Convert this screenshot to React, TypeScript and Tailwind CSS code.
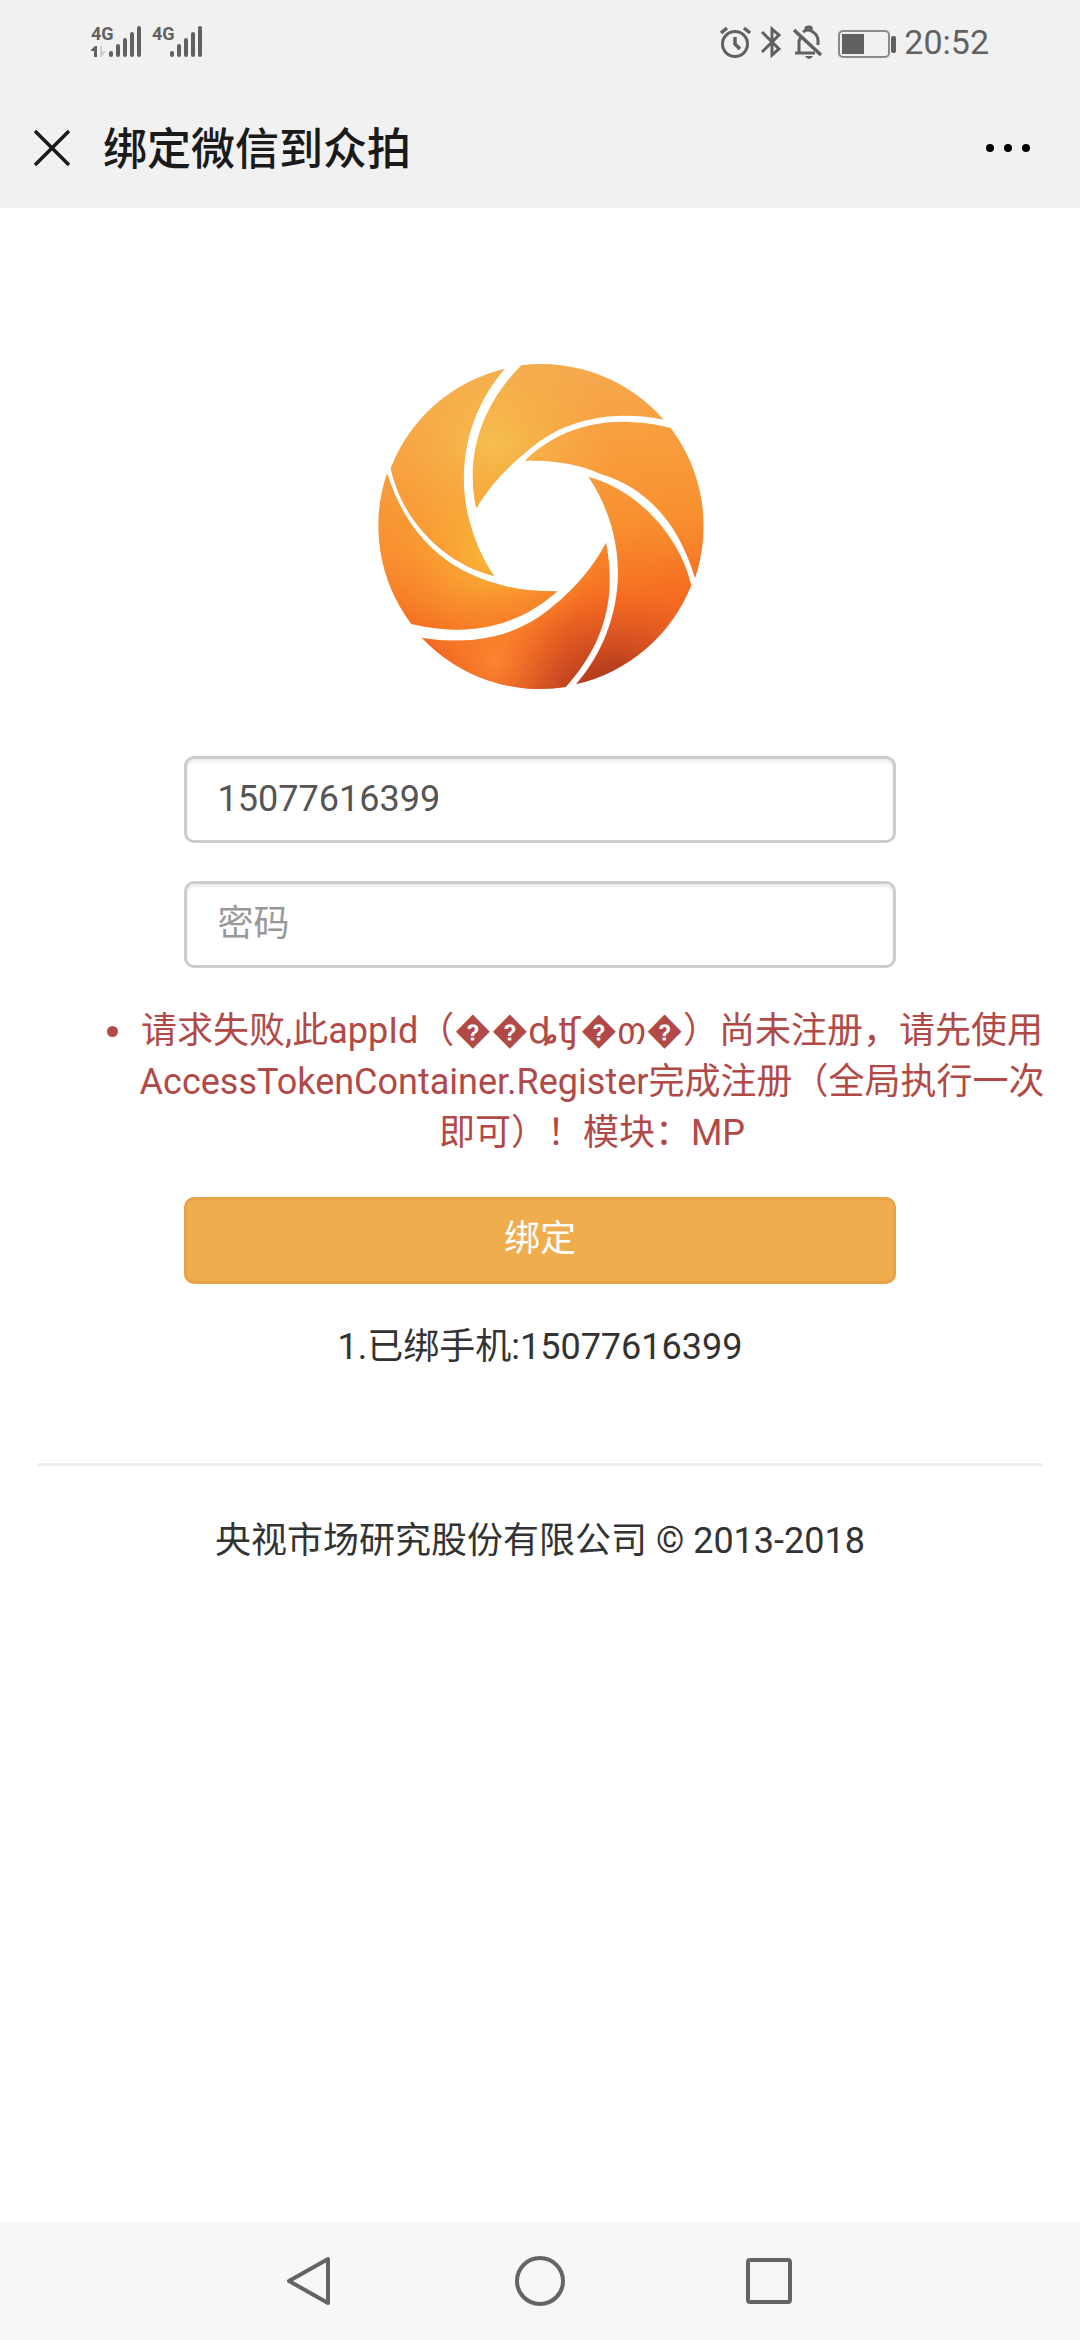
import { useState } from "react";

const ink = "#616161";

function Signal({ secondary = false }: { secondary?: boolean }) {
  return (
    <div className="relative h-8 w-[51px]">
      <span className="absolute left-0 top-0 text-[18px] font-bold leading-4 text-[#616161] font-['Liberation_Sans_Narrow','Roboto',sans-serif]">
        4G
      </span>
      <svg className="h-8 w-[51px]" viewBox="0 0 51 32" fill={ink}>
        {secondary && (
          <>
            <path d="M0 24L4 20H6V31H3V25H0Z" />
            <path d="M9 20H11V25H15L11 31H9Z" fill="#cfcfcf" />
          </>
        )}
        <rect x="18" y="25" width="4" height="6" rx="2" />
        <rect x="25" y="18" width="4" height="13" rx="2" />
        <rect x="32" y="12" width="4" height="19" rx="2" />
        <rect x="39" y="6" width="4" height="25" rx="2" />
        <rect x="46" y="0" width="4" height="31" rx="2" />
      </svg>
    </div>
  );
}

function StatusBar() {
  return (
    <div className="flex h-[84px] items-center justify-between px-[91px]">
      <div className="flex gap-[10px]">
        <Signal secondary />
        <Signal />
      </div>
      <div className="flex items-center">
        {/* alarm, bluetooth, muted bell, battery */}
        <svg
          className="h-9 w-[180px]"
          viewBox="0 0 180 36"
          fill="none"
          stroke={ink}
          strokeWidth="3"
        >
          <circle cx="15" cy="20" r="12.5" />
          <path d="M15 13V20L20 25" strokeWidth="3.5" />
          <path d="M1 9L7 4M30 9L24 4" strokeWidth="3.5" />
          <path d="M42 8L59 25L52 31V5L59 11L42 28" />
          <path d="M74 6L101 31" strokeWidth="3.5" />
          <path d="M75 29H95M79 29V17L81 13M83 8Q88 4 93 8Q98 11 98 17V21M86 6V4Q86 3 89 3T91 5V7" />
          <path d="M85 32H93Q91 35 89 35T85 32Z" fill={ink} stroke="none" />
          <rect x="119" y="7" width="50" height="26" rx="4" strokeWidth="2" stroke="#8a8a8a" />
          <rect x="122" y="10" width="22" height="20" fill={ink} stroke="none" />
          <rect x="171" y="12" width="5" height="17" rx="2" fill={ink} stroke="none" />
        </svg>
        <span className="ml-1 text-[34px] leading-9 text-[#616161]">20:52</span>
      </div>
    </div>
  );
}

function TitleBar() {
  return (
    <header className="flex h-[124px] items-center pl-[33px] pr-[50px] pt-1">
      <button type="button" aria-label="关闭">
        <svg className="h-[38px] w-[38px]" viewBox="0 0 38 38" stroke="#1a1a1a" strokeWidth="3.5">
          <path d="M2 2L36 36M36 2L2 36" />
        </svg>
      </button>
      <h1 className="ml-8 flex-1 pt-1 text-[44px] font-medium leading-[64px] text-[#1a1a1a]">
        绑定微信到众拍
      </h1>
      <button type="button" aria-label="更多" className="flex gap-[10px]">
        <span className="h-2 w-2 rounded-full bg-black" />
        <span className="h-2 w-2 rounded-full bg-black" />
        <span className="h-2 w-2 rounded-full bg-black" />
      </button>
    </header>
  );
}

function Logo() {
  return (
    <svg className="h-[360px] w-[360px]" viewBox="0 0 1080 1080" role="img" aria-label="众拍">
      <defs>
        <clipPath id="blades">
          <path d="M484 46A488 488 0 0 1 911 209C800 185 640 190 520 288C455 340 395 395 349 475C315 320 365 165 484 46Z" />
          <path d="M932 234A488 488 0 0 1 1005 685C955 515 855 410 720 371C650 340 570 330 495 332C605 222 765 190 932 234Z" />
          <path d="M994 706A488 488 0 0 1 649 1002C745 890 795 735 765 575C752 505 725 440 685 380C835 420 960 560 994 706Z" />
          <path d="M617 1011A488 488 0 0 1 185 863C320 885 460 870 575 772C650 710 700 650 738 578C770 740 735 880 617 1011Z" />
          <path d="M154 822A488 488 0 0 1 81 370C140 550 250 655 405 700C470 720 530 725 592 724C480 825 330 865 154 822Z" />
          <path d="M92 355A488 488 0 0 1 435 56C330 175 290 335 322 490C337 555 362 620 402 678C250 640 125 510 92 355Z" />
        </clipPath>
        <linearGradient id="base" gradientUnits="userSpaceOnUse" x1="480" y1="40" x2="600" y2="1020">
          <stop offset="0" stopColor="#f5ab50" />
          <stop offset="0.3" stopColor="#f89c3c" />
          <stop offset="0.52" stopColor="#f8902f" />
          <stop offset="0.76" stopColor="#f66c21" />
          <stop offset="1" stopColor="#e4562a" />
        </linearGradient>
        <radialGradient id="glowTop" gradientUnits="userSpaceOnUse" cx="400" cy="290" r="360">
          <stop offset="0" stopColor="#f6bf4e" />
          <stop offset="1" stopColor="#f6b04a" stopOpacity="0" />
        </radialGradient>
        <radialGradient id="glowMid" gradientUnits="userSpaceOnUse" cx="390" cy="610" r="330">
          <stop offset="0" stopColor="#f9b73a" />
          <stop offset="1" stopColor="#f9a032" stopOpacity="0" />
        </radialGradient>
        <radialGradient id="glowLow" gradientUnits="userSpaceOnUse" cx="410" cy="930" r="220">
          <stop offset="0" stopColor="#fa8630" />
          <stop offset="1" stopColor="#fa8025" stopOpacity="0" />
        </radialGradient>
        <radialGradient id="shade" gradientUnits="userSpaceOnUse" cx="760" cy="1080" r="380">
          <stop offset="0" stopColor="#8f281a" />
          <stop offset="0.4" stopColor="#b03a1c" stopOpacity="0.7" />
          <stop offset="1" stopColor="#e85a20" stopOpacity="0" />
        </radialGradient>
      </defs>
      <g clipPath="url(#blades)">
        <rect width="1080" height="1080" fill="url(#base)" />
        <rect width="1080" height="1080" fill="url(#glowTop)" />
        <rect width="1080" height="1080" fill="url(#glowMid)" />
        <rect width="1080" height="1080" fill="url(#glowLow)" />
        <rect width="1080" height="1080" fill="url(#shade)" />
      </g>
    </svg>
  );
}

const fieldClass =
  "h-[87px] w-[66%] rounded-[10px] border-[3px] border-[#ccc] bg-white px-[31px] pb-[2px] text-[#555] shadow-[inset_0_3px_3px_rgba(0,0,0,0.075)] outline-none placeholder:text-[#999]";

function BindForm() {
  const [phone, setPhone] = useState("15077616399");
  const [password, setPassword] = useState("");

  return (
    <form
      className="flex flex-col items-center"
      onSubmit={(e) => e.preventDefault()}
    >
      <input
        type="tel"
        name="phone"
        aria-label="手机号"
        value={phone}
        onChange={(e) => setPhone(e.target.value)}
        className={fieldClass}
      />
      <input
        type="password"
        name="password"
        aria-label="密码"
        placeholder="密码"
        value={password}
        onChange={(e) => setPassword(e.target.value)}
        className={`mt-[38px] ${fieldClass}`}
      />

      <ul className="mt-[38px] list-disc self-stretch pl-[136px] pr-8 text-center text-[#b14a47]">
        <li>
          请求失败,此appId（��ȡʧ�თ�）尚未注册，请先使用AccessTokenContainer.Register完成注册（全局执行一次即可）！模块：MP
        </li>
      </ul>

      <button
        type="submit"
        className="mt-[38px] h-[87px] w-[66%] rounded-[10px] border-[3px] border-[#e8a348] bg-[#f0ad4e] pb-[2px] text-white"
      >
        绑定
      </button>
    </form>
  );
}

function NavBar() {
  return (
    <nav className="flex h-[118px] items-center justify-center gap-[180px] bg-[#f7f7f7]">
      <button type="button" aria-label="返回">
        <svg className="h-[50px] w-[50px]" viewBox="0 0 50 50" fill="none" stroke="#646464" strokeWidth="4" strokeLinejoin="round">
          <path d="M4 25L43 3V47Z" />
        </svg>
      </button>
      <button type="button" aria-label="主页">
        <svg className="h-[50px] w-[50px]" viewBox="0 0 50 50" fill="none" stroke="#646464" strokeWidth="4">
          <circle cx="25" cy="25" r="23" />
        </svg>
      </button>
      <button type="button" aria-label="最近任务">
        <svg className="h-[50px] w-[50px]" viewBox="0 0 50 50" fill="none" stroke="#646464" strokeWidth="4">
          <rect x="3" y="4" width="42" height="42" rx="2" />
        </svg>
      </button>
    </nav>
  );
}

export default function App() {
  return (
    <div className="flex min-h-screen flex-col bg-white text-[36px] leading-[51px] text-[#333] font-['Roboto','Noto_Sans_CJK_SC','DejaVu_Sans',sans-serif]">
      <div className="bg-[#f1f1f1]">
        <StatusBar />
        <TitleBar />
      </div>
      <main className="flex-1">
        <div className="flex justify-center pb-[46px] pt-[142px]">
          <Logo />
        </div>
        <BindForm />
        <p className="mt-[38px] text-center">1.已绑手机:15077616399</p>
        <hr className="mx-[38px] mt-[90px] border-t-[3px] border-[#eee]" />
        <footer className="mt-[50px] text-center">
          央视市场研究股份有限公司 © 2013-2018
        </footer>
      </main>
      <NavBar />
    </div>
  );
}
